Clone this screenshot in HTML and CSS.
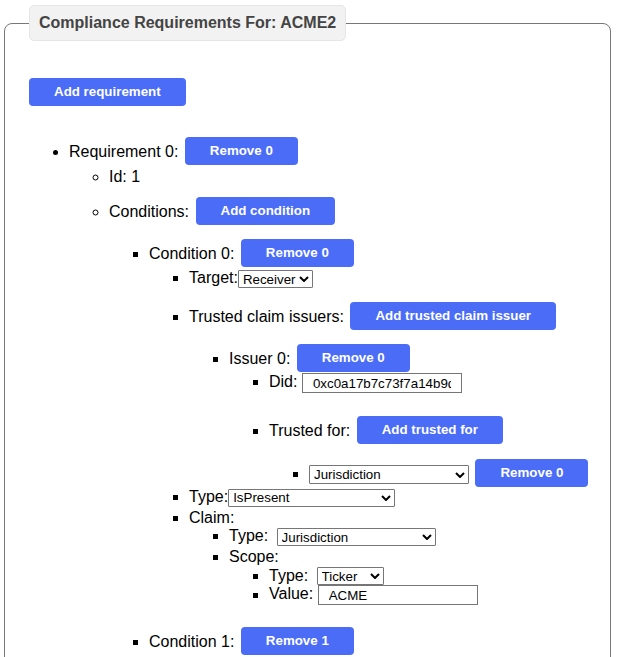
FILE: index.html
```html
<!DOCTYPE html>
<html lang="en">
<head>
<meta charset="utf-8">
<title>Compliance Requirements</title>
<link rel="stylesheet" href="styles.css">
</head>
<body>
<fieldset class="panel">
  <legend class="panel-title">Compliance Requirements For: ACME2</legend>
  <div class="toolbar"><button class="btn">Add requirement</button></div>
  <ul class="tree">
    <li>Requirement 0: <button class="btn">Remove 0</button>
      <ul>
        <li class="m3">Id: 1</li>
        <li class="m11">Conditions: <button class="btn">Add condition</button>
          <ul>
            <li class="m14">Condition 0: <button class="btn">Remove 0</button>
              <ul>
                <li class="m2">Target:<span class="sel w75"><select><option>Receiver</option></select><svg class="chev" viewBox="0 0 10 6" width="10" height="6"><path d="M1 1l4 4 4-4" fill="none" stroke="#000" stroke-width="2"/></svg></span></li>
                <li class="m14">Trusted claim issuers: <button class="btn">Add trusted claim issuer</button>
                  <ul>
                    <li class="m14">Issuer 0: <button class="btn">Remove 0</button>
                      <ul>
                        <li class="m1">Did: <input class="field" type="text" value="0xc0a17b7c73f7a14b9d5c8e0b4c4b6c1a"></li>
                        <li class="m23">Trusted for: <button class="btn">Add trusted for</button>
                          <ul>
                            <li class="m15"><span class="sel w160 tall"><select><option>Jurisdiction</option></select><svg class="chev" viewBox="0 0 10 6" width="10" height="6"><path d="M1 1l4 4 4-4" fill="none" stroke="#000" stroke-width="2"/></svg></span> <button class="btn">Remove 0</button></li>
                          </ul>
                        </li>
                      </ul>
                    </li>
                  </ul>
                </li>
                <li class="m1">Type:<span class="sel w167"><select><option>IsPresent</option></select><svg class="chev" viewBox="0 0 10 6" width="10" height="6"><path d="M1 1l4 4 4-4" fill="none" stroke="#000" stroke-width="2"/></svg></span></li>
                <li class="m2">Claim:
                  <ul>
                    <li>Type: <span class="sel w159 gap"><select><option>Jurisdiction</option></select><svg class="chev" viewBox="0 0 10 6" width="10" height="6"><path d="M1 1l4 4 4-4" fill="none" stroke="#000" stroke-width="2"/></svg></span></li>
                    <li class="m2">Scope:
                      <ul>
                        <li>Type: <span class="sel w67 gap"><select><option>Ticker</option></select><svg class="chev" viewBox="0 0 10 6" width="10" height="6"><path d="M1 1l4 4 4-4" fill="none" stroke="#000" stroke-width="2"/></svg></span></li>
                        <li>Value: <input class="field" type="text" value="ACME"></li>
                      </ul>
                    </li>
                  </ul>
                </li>
              </ul>
            </li>
            <li class="m22">Condition 1: <button class="btn">Remove 1</button></li>
          </ul>
        </li>
      </ul>
    </li>
  </ul>
</fieldset>
</body>
</html>
```

FILE: styles.css
```css
html, body {
  margin: 0;
  padding: 0;
  background: #ffffff;
}

body {
  font-family: "Liberation Sans", Arial, Helvetica, sans-serif;
  font-size: 16px;
  line-height: 18.4px;
  color: #000000;
}

.panel {
  margin: 5px 6px 0 4px;
  padding: 37px 10px 20px 24px;
  border: 1px solid #777777;
  border-radius: 8px;
  min-width: 0;
}

.panel-title {
  padding: 8px 9px;
  background: #f2f2f2;
  border: 1px solid #e6e6e6;
  border-radius: 5px;
  color: #444444;
  font-weight: bold;
  font-size: 16px;
  line-height: 18px;
}

.toolbar {
  display: flex;
}

.btn {
  display: inline-block;
  box-sizing: border-box;
  height: 28px;
  margin: 0;
  padding: 0 25px;
  border: 0;
  border-radius: 4px;
  background: #4a6cf7;
  color: #ffffff;
  font-family: "Liberation Sans", Arial, Helvetica, sans-serif;
  font-size: 13.33px;
  font-weight: bold;
  line-height: 28px;
  vertical-align: 2px;
}

.tree .btn {
  margin-left: 2px;
}

.tree {
  margin: 31px 0 0 0;
  padding-left: 40px;
}

.tree ul {
  margin: 0;
  padding-left: 40px;
}

.m1 { margin-top: 1px; }
.m2 { margin-top: 2px; }
.m3 { margin-top: 3px; }
.m11 { margin-top: 11px; }
.m14 { margin-top: 14px; }
.m15 { margin-top: 15px; }
.m22 { margin-top: 22px; }
.m23 { margin-top: 23px; }

.sel {
  position: relative;
  display: inline-block;
  height: 18px;
  vertical-align: middle;
}

.sel.tall { height: 19px; }
.sel.gap { margin-left: 4px; }

.sel select {
  display: block;
  box-sizing: border-box;
  width: 100%;
  height: 100%;
  margin: 0;
  padding: 0 16px 0 4px;
  border: 1px solid #767676;
  border-radius: 1px;
  background: #ffffff;
  color: #000000;
  font-family: "Liberation Sans", Arial, Helvetica, sans-serif;
  font-size: 13.33px;
  appearance: none;
  -webkit-appearance: none;
}

.chev {
  position: absolute;
  right: 4px;
  top: 50%;
  margin-top: -3px;
  pointer-events: none;
}

.w67 { width: 67px; }
.w75 { width: 75px; }
.w159 { width: 159px; }
.w160 { width: 160px; }
.w167 { width: 167px; }

.field {
  box-sizing: border-box;
  width: 160px;
  height: 20px;
  margin: 0;
  padding: 0 10px;
  border: 1px solid #767676;
  border-radius: 0;
  background: #ffffff;
  color: #000000;
  font-family: "Liberation Sans", Arial, Helvetica, sans-serif;
  font-size: 13.33px;
  vertical-align: middle;
}
```
